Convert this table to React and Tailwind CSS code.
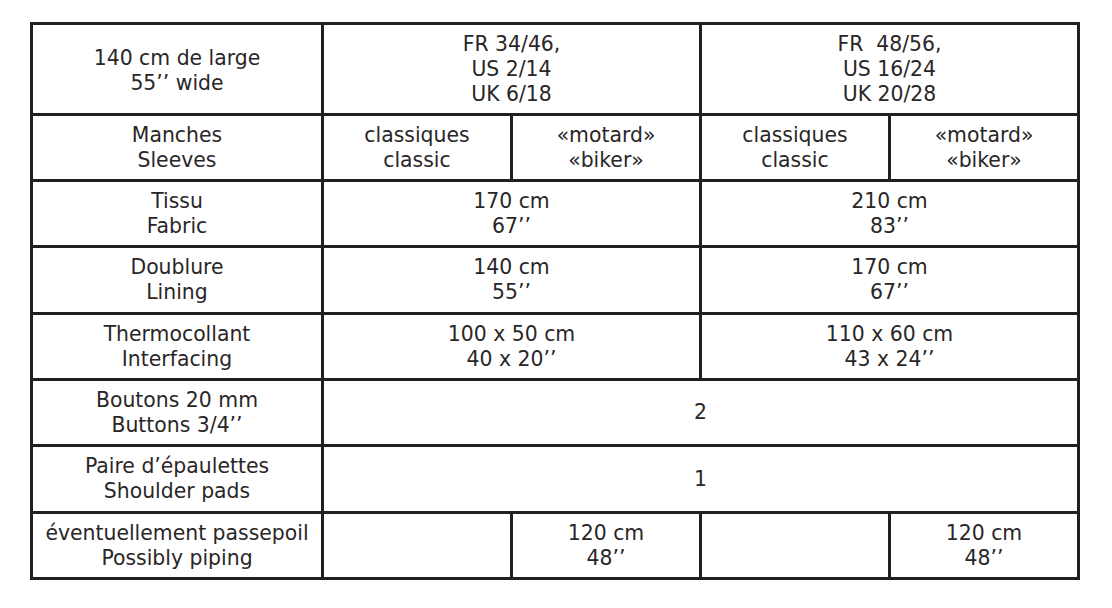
import React from "react";

const Cell = ({ children, className = "" }) => (
  <div className={"bg-white flex items-center justify-center text-center " + className}>
    <div className="whitespace-pre">{children}</div>
  </div>
);

export default function App() {
  return (
    <div className="w-[1112px] h-[608px] bg-white pt-[22px] pl-[30px]" style={{ fontFamily: '"DejaVu Sans", sans-serif' }}>
      <div className="w-[1050px] grid grid-cols-[288px_186px_186px_186px_186px] grid-rows-[88px_63px_63px_64px_63px_63px_64px_63px] gap-[3px] p-[3px] bg-[#231f20] text-[20.4px] leading-[25px] text-[#2a2627]">
        <Cell className="pt-[3px]">{"140 cm de large\n55’’ wide"}</Cell>
        <Cell className="col-span-2">{"FR 34/46,\nUS 2/14\nUK 6/18"}</Cell>
        <Cell className="col-span-2">{"FR  48/56,\nUS 16/24\nUK 20/28"}</Cell>

        <Cell>{"Manches\nSleeves"}</Cell>
        <Cell>{"classiques\nclassic"}</Cell>
        <Cell>{"«motard»\n«biker»"}</Cell>
        <Cell>{"classiques\nclassic"}</Cell>
        <Cell>{"«motard»\n«biker»"}</Cell>

        <Cell>{"Tissu\nFabric"}</Cell>
        <Cell className="col-span-2">{"170 cm\n67’’"}</Cell>
        <Cell className="col-span-2">{"210 cm\n83’’"}</Cell>

        <Cell>{"Doublure\nLining"}</Cell>
        <Cell className="col-span-2">{"140 cm\n55’’"}</Cell>
        <Cell className="col-span-2">{"170 cm\n67’’"}</Cell>

        <Cell>{"Thermocollant\nInterfacing"}</Cell>
        <Cell className="col-span-2">{"100 x 50 cm\n40 x 20’’"}</Cell>
        <Cell className="col-span-2">{"110 x 60 cm\n43 x 24’’"}</Cell>

        <Cell>{"Boutons 20 mm\nButtons 3/4’’"}</Cell>
        <Cell className="col-span-4">{"2"}</Cell>

        <Cell>{"Paire d’épaulettes\nShoulder pads"}</Cell>
        <Cell className="col-span-4">{"1"}</Cell>

        <Cell>{"éventuellement passepoil\nPossibly piping"}</Cell>
        <Cell>{""}</Cell>
        <Cell>{"120 cm\n48’’"}</Cell>
        <Cell>{""}</Cell>
        <Cell>{"120 cm\n48’’"}</Cell>
      </div>
    </div>
  );
}
